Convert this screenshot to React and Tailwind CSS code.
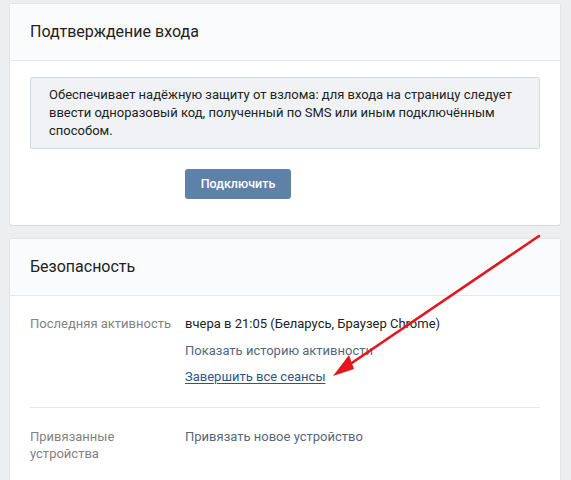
export default function App() {
  return (
    <div
      className="relative min-h-[480px] w-[571px] overflow-hidden bg-[#edeef0] pt-[4px] pl-[10px] pr-[11px]"
      style={{ fontFamily: "Roboto, 'Open Sans', Arial, sans-serif" }}
    >
      <section className="rounded-[2px] bg-white shadow-[0_1px_0_0_#d7d8db,0_0_0_1px_#e3e4e8]">
        <div className="flex h-[57px] items-center border-b border-[#e7e8ec] bg-[#fafbfc] px-[20px] text-[16px] text-[#222]">
          Подтверждение входа
        </div>
        <div className="px-[20px] pt-[16px] pb-[26px]">
          <div className="rounded-[2px] border border-[#d3d9de] bg-[#f0f2f5] py-[8px] pl-[18px] pr-[16px] text-[13px] leading-[18px] text-[#222]">
            Обеспечивает надёжную защиту от взлома: для входа на страницу следует ввести одноразовый код, полученный по SMS или иным подключённым способом.
          </div>
          <div className="mt-[20px] pl-[155px]">
            <button className="h-[30px] w-[106px] rounded-[3px] bg-[#5e81a8] text-[12.5px] font-medium text-white">
              Подключить
            </button>
          </div>
        </div>
      </section>

      <section className="mt-[14px] rounded-[2px] bg-white shadow-[0_1px_0_0_#d7d8db,0_0_0_1px_#e3e4e8]">
        <div className="flex h-[57px] items-center border-b border-[#e7e8ec] bg-[#fafbfc] px-[20px] text-[16px] text-[#222]">
          Безопасность
        </div>
        <div className="px-[20px] pt-[19px] text-[13px] leading-[17px]">
          <div className="flex border-b border-[#e7e8ec] pb-[22px]">
            <div className="w-[155px] shrink-0 text-[#828282]">Последняя активность</div>
            <div className="flex flex-col gap-[9.5px]">
              <div className="text-[#222]">вчера в 21:05 (Беларусь, Браузер Chrome)</div>
              <div className="text-[#55677d]">Показать историю активности</div>
              <div className="text-[#2a5885] underline underline-offset-2">Завершить все сеансы</div>
            </div>
          </div>
          <div className="flex pt-[20px] pb-[20px]">
            <div className="w-[155px] shrink-0 text-[#828282]">
              Привязанные
              <br />
              устройства
            </div>
            <div className="text-[#55677d]">Привязать новое устройство</div>
          </div>
        </div>
      </section>

      <svg className="pointer-events-none absolute left-0 top-0" width="571" height="480" aria-hidden>
        <line x1="539" y1="236" x2="340" y2="371" stroke="#e3161c" strokeWidth="2.6" strokeLinecap="round" />
        <path d="M333 376 L349 355 L354 369 Z" fill="#e3161c" />
      </svg>
    </div>
  );
}
